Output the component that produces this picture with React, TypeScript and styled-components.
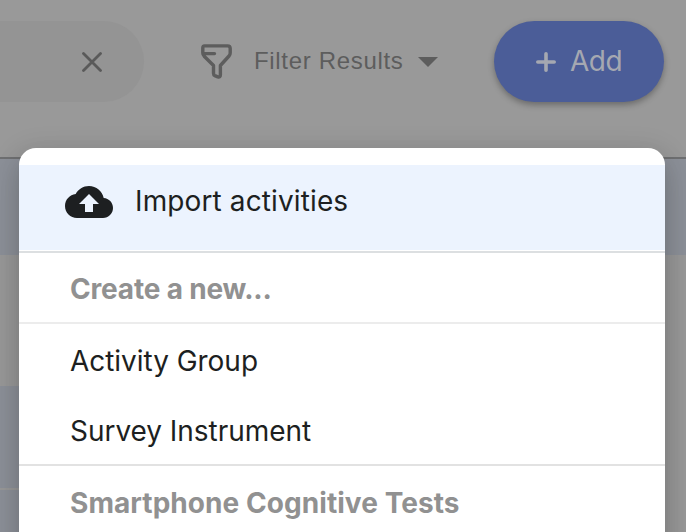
import React from "react";
import styled, { createGlobalStyle } from "styled-components";

const GlobalStyle = createGlobalStyle`
  *, *::before, *::after { box-sizing: border-box; }
  html, body { margin: 0; padding: 0; overflow: hidden; background: #999; }
`;

const Page = styled.div`
  position: relative;
  width: 686px;
  height: 532px;
  overflow: hidden;
  background: #999;
  font-family: Inter, "Liberation Sans", sans-serif;
`;

const Toolbar = styled.header`
  display: flex;
  align-items: flex-start;
  height: 159px;
  padding-top: 21px;
  border-bottom: 2px solid #6f7072;
`;

const SearchField = styled.div`
  display: flex;
  align-items: center;
  justify-content: flex-end;
  width: 144px;
  height: 81px;
  padding-right: 42px;
  border-radius: 0 41px 41px 0;
  background: #949494;
`;

const FilterButton = styled.div`
  display: flex;
  align-items: center;
  width: 239px;
  height: 81px;
  margin-left: 56px;
  color: #5d5d5d;
`;

const FilterLabel = styled.span`
  width: 164px;
  margin-left: 21px;
  padding-bottom: 2px;
  font: 400 24px/30px "Liberation Sans", Arial, sans-serif;
  letter-spacing: 0.67px;
  white-space: nowrap;
`;

const AddButton = styled.div`
  display: flex;
  align-items: center;
  width: 170px;
  height: 81px;
  margin-left: 55px;
  padding-left: 42px;
  border-radius: 41px;
  background: #4b5d98;
  color: #a5a8b1;
  box-shadow: 0 3px 6px rgba(0, 0, 0, 0.3);
`;

const AddLabel = styled.span`
  margin-left: 14px;
  padding-bottom: 1px;
  font-size: 28px;
  font-weight: 370;
  line-height: 36px;
  letter-spacing: -0.5px;
`;

const Columns = styled.div`
  display: grid;
  grid-template-columns: 1fr 200px;
`;

const Cell = styled.div<{ $height: number; $shaded?: boolean; $line?: boolean }>`
  height: ${(p) => p.$height}px;
  background: ${(p) => (p.$shaded ? "#8d9199" : "#999")};
  border-bottom: ${(p) => (p.$line ? "2px solid #999" : "0")};
`;

const Menu = styled.div`
  position: absolute;
  top: 148px;
  left: 19px;
  width: 646px;
  height: 440px;
  padding-top: 17px;
  border-radius: 17px;
  background: #fff;
  box-shadow: 0 10px 10px -6px rgba(0, 0, 0, 0.14), 0 16px 30px 2px rgba(0, 0, 0, 0.12),
    0 6px 28px 4px rgba(0, 0, 0, 0.1);
`;

const ImportItem = styled.div`
  display: flex;
  align-items: center;
  height: 85px;
  padding: 0 0 11px 46px;
  background: #ecf3fe;
`;

const Divider = styled.div<{ $color: string; $gap?: number }>`
  height: 2px;
  margin-top: ${(p) => p.$gap ?? 0}px;
  background: ${(p) => p.$color};
`;

const MenuLabel = styled.span<{ $spacing: number }>`
  font-size: 28px;
  font-weight: 370;
  line-height: 36px;
  letter-spacing: ${(p) => p.$spacing}px;
  color: #1d1f21;
  white-space: nowrap;
`;

const ImportLabel = styled(MenuLabel)`
  margin-left: 22px;
  padding-bottom: 2px;
`;

const MenuItem = styled.div`
  display: flex;
  align-items: center;
  height: 70px;
  padding: 4px 0 0 51px;
`;

const SectionTitle = styled.div<{ $offset: number }>`
  display: flex;
  align-items: center;
  height: 69px;
  padding: ${(p) => p.$offset}px 0 0 51px;
`;

const SectionLabel = styled(MenuLabel)`
  font-weight: 700;
  color: #919191;
`;

const App = () => (
  <>
    <GlobalStyle />
    <Page>
      <Toolbar>
        <SearchField>
          <svg width="20" height="20" viewBox="0 0 20 20" fill="none" stroke="#5a5a5a" strokeWidth="2.8" strokeLinecap="round">
            <path d="M1.5 1.5 18.5 18.5M18.5 1.5 1.5 18.5" />
          </svg>
        </SearchField>
        <FilterButton>
          <svg width="33" height="36" viewBox="0 0 33 36" fill="none" stroke="currentColor" strokeWidth="3.4" strokeLinecap="round" strokeLinejoin="round">
            <path d="M4.5 1.9H27.5Q30.2 1.9 30.2 4.6V9Q30.2 10.7 29 12L20.4 21.5V30.8Q20.4 33.6 17.8 32.9L14.8 31.6Q13.5 31 13.5 29.2V21.5L4.2 12.2Q2.8 10.7 2.8 9V3.9Q2.8 1.9 4.5 1.9ZM3.5 9.6H14.5" />
          </svg>
          <FilterLabel>Filter Results</FilterLabel>
          <svg width="20" height="10" viewBox="0 0 20 10" fill="currentColor">
            <path d="M0 0H20L10 10Z" />
          </svg>
        </FilterButton>
        <AddButton>
          <svg width="20" height="20" viewBox="0 0 20 20" fill="none" stroke="currentColor" strokeWidth="3.6" strokeLinecap="round">
            <path d="M10 1.8V18.2M1.8 10H18.2" />
          </svg>
          <AddLabel>Add</AddLabel>
        </AddButton>
      </Toolbar>
      <Columns>
        <Cell $height={96} $shaded />
        <Cell $height={96} $shaded />
        <Cell $height={131} />
        <Cell $height={131} />
        <Cell $height={104} $shaded $line />
        <Cell $height={104} />
        <Cell $height={42} $shaded />
        <Cell $height={42} />
      </Columns>
      <Menu>
        <ImportItem>
          <svg width="48" height="32" viewBox="0 4 24 16" fill="#1d1f21">
            <path d="M19.35 10.04C18.67 6.59 15.64 4 12 4 9.11 4 6.6 5.64 5.35 8.04 2.34 8.36 0 10.91 0 14c0 3.31 2.69 6 6 6h13c2.76 0 5-2.24 5-5 0-2.64-2.05-4.78-4.65-4.96zM14 13v4h-4v-4H7l5-5 5 5h-3z" />
          </svg>
          <ImportLabel $spacing={0.12}>Import activities</ImportLabel>
        </ImportItem>
        <Divider $color="#dcdfe1" $gap={1} />
        <SectionTitle $offset={3}>
          <SectionLabel $spacing={-0.18}>Create a new...</SectionLabel>
        </SectionTitle>
        <Divider $color="#ececec" />
        <MenuItem>
          <MenuLabel $spacing={-0.04}>Activity Group</MenuLabel>
        </MenuItem>
        <MenuItem>
          <MenuLabel $spacing={-0.03}>Survey Instrument</MenuLabel>
        </MenuItem>
        <Divider $color="#e2e2e2" />
        <SectionTitle $offset={5}>
          <SectionLabel $spacing={0.06}>Smartphone Cognitive Tests</SectionLabel>
        </SectionTitle>
      </Menu>
    </Page>
  </>
);

export default App;
